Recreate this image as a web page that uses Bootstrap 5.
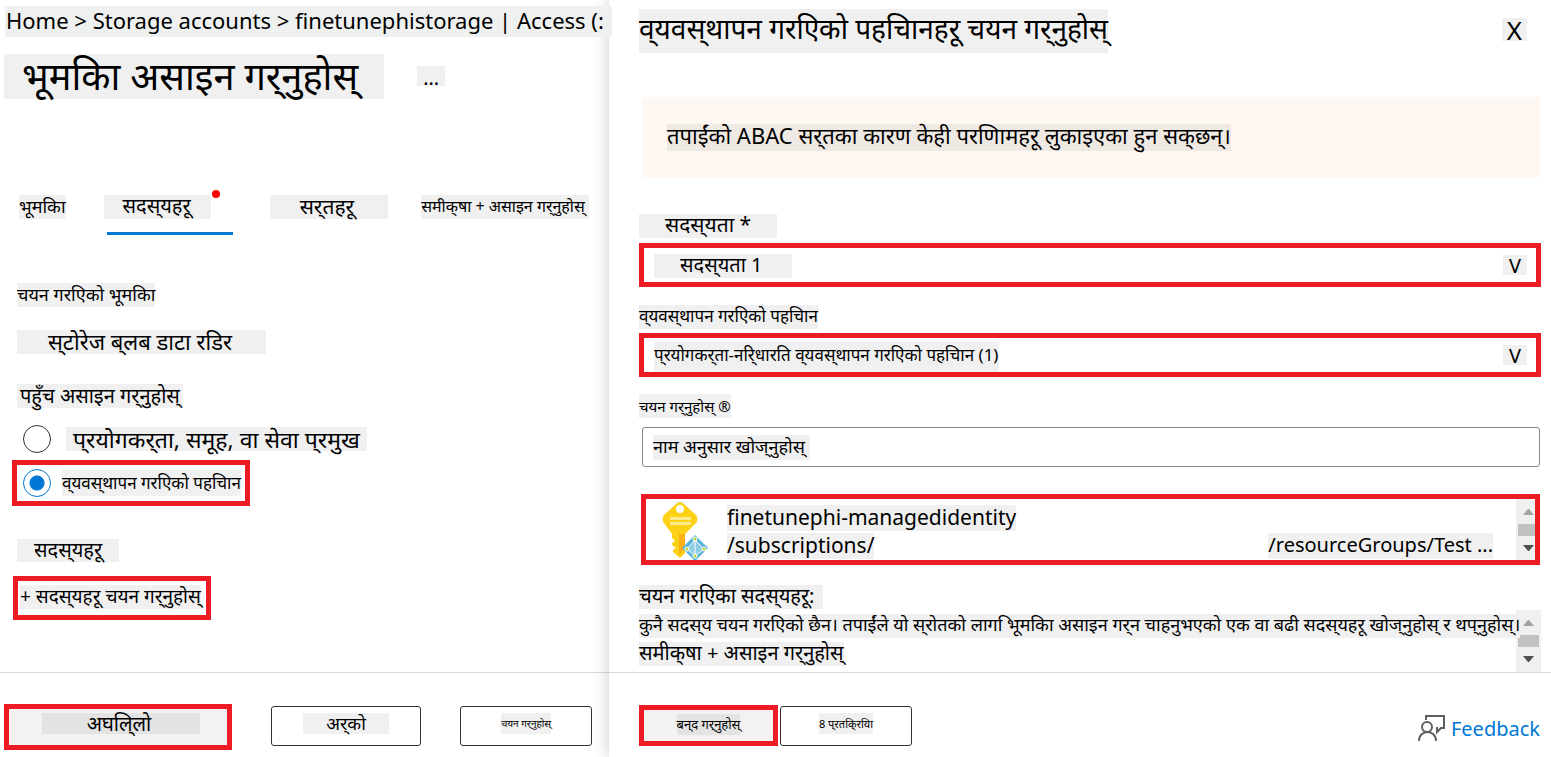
<!DOCTYPE html>
<html lang="ne">
<head>
<meta charset="utf-8">
<meta name="viewport" content="width=device-width, initial-scale=1">
<title>भूमकिा असाइन गर्&zwnj;नुहोस्</title>
<link href="https://cdn.jsdelivr.net/npm/bootstrap@5.3.0/dist/css/bootstrap.min.css" rel="stylesheet">
<style>
  body { font-family: "Noto Sans", sans-serif; font-feature-settings: "blws" 0; color: #000; background: #fff; font-size: 20px; line-height: 24px; }
  .shell { display: grid; grid-template-columns: 609fr 942fr; min-height: 100vh; }
  .pane { min-width: 0; }
  .side-pane { background: #fff; box-shadow: 0 0 16px rgba(0,0,0,.22); padding-top: 9px; }
  .main-pane { padding-top: 6px; }
  .chip { display: inline-block; background: #f0f0f0; white-space: nowrap; line-height: 24px; }
  .t10 { font-size: 10px; } .t11 { font-size: 11px; } .t13 { font-size: 13px; } .t15 { font-size: 15px; }
  .t16 { font-size: 16px; } .t17 { font-size: 17px; } .t18 { font-size: 18px; } .t19 { font-size: 19px; }
  .t20 { font-size: 20px; } .t21 { font-size: 21px; } .t22 { font-size: 22px; } .t23 { font-size: 23px; }
  .crumbs { margin-left: 5px; height: 31px; line-height: 28px; font-size: 22px; background: #eff1f1; white-space: nowrap; position: relative; z-index: 2; padding-left: 1px; width: max-content; padding-right: 8px; }
  .crumbs a, .tabs a, .add-link { color: inherit; text-decoration: none; }
  .page-title { font-size: 38px; line-height: 42px; height: 45px; padding: 0 26px 0 18px; margin: 0; font-weight: 400; }
  .title-row { margin: 17px 0 96px 4px; gap: 33px; }
  .more { border: 0; padding: 0 6px; height: 20px; line-height: 24px; margin-top: 12px; }
  .tabs { padding: 0 19px; height: 40px; }
  .tabs a { display: block; height: 40px; position: relative; }
  .tabs .chip { line-height: 22px; height: 24px; vertical-align: top; }
  .tab-active { margin-left: 38px; padding-right: 22px; }
  .tab-active::after { content: ""; position: absolute; left: 3px; right: 0; bottom: 0; height: 3px; background: #0078d4; }
  .tab-active .chip { padding: 0 20px 0 19px; }
  .tab-cond { margin-left: 37px; }
  .tab-cond .chip { padding: 0 34px 0 30px; }
  .tab-review { margin-left: 33px; }
  .tab-review .chip { padding-right: 4px; }
  .dot { position: absolute; width: 8px; height: 8px; border-radius: 50%; background: #f00; right: 13px; top: -5px; }
  .marked { border: 5px solid #ed1c24; }
  .stack { padding-left: 17px; }
  .role-label { margin-top: 48px; line-height: 22px; height: 24px; }
  .role-name { margin-top: 23px; padding: 0 34px 0 31px; line-height: 22px; height: 24px; }
  .assign { margin-top: 30px; padding: 0 3px; }
  .pick { width: 28px; height: 28px; margin: 0; flex: none; appearance: none; border: 1px solid #323130; border-radius: 50%; background: #fff; }
  .pick:checked { border-color: #0078d4; background: radial-gradient(circle, #0078d4 7px, #fff 8px); }
  .choice { gap: 11px; padding-left: 6px; }
  .choice-off { margin-top: 17px; }
  .choice-off .chip { margin-left: 4px; padding: 0 7px 0 7px; }
  .choice-on { margin: 7px 0 33px -5px; height: 46px; padding: 0 4px 0 6px; width: max-content; }
  .choice-on .chip { line-height: 26px; }
  .members { padding: 0 17px; line-height: 22px; height: 23px; }
  .add-link { margin: 14px 0 0 -4px; padding: 4px 5px 6px 2px; display: block; width: max-content; }
  .add-link .chip { line-height: 22px; height: 24px; vertical-align: top; }
  .foot { border-top: 1px solid #dcdcdc; height: 85px; padding-top: 31px; }
  .foot button { background: #fff; border: 1px solid #323130; border-radius: 3px; height: 40px; margin-top: 2px; padding: 6px 0 0; display: flex; justify-content: center; align-items: flex-start; color: #000; }
  .foot button.marked { border: 5px solid #ed1c24; border-radius: 0; background: #f3f2f1; margin-top: 0; padding-top: 4px; }
  .foot button .chip { line-height: 21px; }
  .foot button.marked .chip { background: #e3e3e3; }
  .btns { gap: 39px; padding-left: 4px; }
  .foot .w-next { width: 228px; height: 46px; }
  .w-next .chip { padding: 0 49px 0 45px; margin-left: 6px; }
  .w-other { width: 150px; }
  .w-other .chip { padding: 0 23px; }
  .w-small { width: 132px; }
  .side-btns { gap: 2px; padding: 1px 0 0 30px; }
  .foot .w-close { width: 139px; height: 41px; }
  .foot .side-btns .w-small { margin-top: 1px; }
  .side-body { padding: 0 11px 0 30px; }
  .side-title { font-size: 28px; line-height: 39px; height: 44px; margin: 0; font-weight: 400; }
  .close-x { border: 0; padding: 0 5px; font-size: 26px; margin: 9px 13px 0 0; height: 23px; line-height: 25px; }
  .notice { margin: 44px 0 36px 3px; background: #fff7f1; border-radius: 4px; padding: 27px 25px; }
  .notice .chip { background: #efe9e4; line-height: 23px; height: 27px; display: block; width: max-content; }
  .combo { height: 44px; margin-right: -1px; }
  .combo select { appearance: none; border: 0; flex: 1; min-width: 0; color: #000; outline: 0; height: 34px; }
  .combo .s-one { padding: 0 0 0 36px; background: linear-gradient(#f0f0f0,#f0f0f0) 10px 6px / 138px 24px no-repeat; }
  .combo .s-two { padding: 0 0 0 10px; background: linear-gradient(#f0f0f0,#f0f0f0) 10px 4px / 345px 30px no-repeat; }
  .combo .chip { padding: 0 6px; line-height: 22px; height: 20px; margin: 7px 9px 0 0; }
  .lab { display: block; width: max-content; }
  .sub-label { padding: 0 26px; line-height: 21px; height: 24px; margin-bottom: 5px; }
  .ident-label { margin: 18px 0 4px; line-height: 22px; height: 24px; }
  .find-label { margin-top: 17px; }
  .search { width: 100%; border: 1px solid #8a8886; border-radius: 3px; height: 40px; padding: 0 10px 2px; color: #000; background: linear-gradient(#f0f0f0,#f0f0f0) 10px 7px / 157px 25px no-repeat; }
  .search::placeholder { color: #000; opacity: 1; }
  .search-wrap { margin: 9px 0 27px 3px; }
  .result { margin-left: 2px; height: 71px; overflow: hidden; }
  .result .key { margin: 2px 0 0 16px; flex: none; }
  .result .words { margin: 6px 0 0 17px; flex: 1; min-width: 0; }
  .result .words .chip { line-height: 24px; height: 26px; }
  .path-row { margin: 2px 23px 0 0; }
  .bar { flex: none; width: 25px; height: 62px; background: #f0f0f0; }
  .bar-cut { width: 19px; height: 61px; overflow: hidden; flex: none; }
  .chosen { margin-top: 20px; padding-right: 9px; line-height: 22px; height: 24px; }
  .chosen-row { margin: 1px -1px 0 0; }
  .chosen-text { flex: 1; min-width: 0; padding-top: 4px; position: relative; }
  .chosen-text .chip { line-height: 21px; height: 24px; margin-bottom: 4px; }
  .feedback { color: #0078d4; text-decoration: none; gap: 6px; margin-right: 11px; padding-top: 11px; }
</style>
</head>
<body>
<div class="shell">
  <main class="pane main-pane d-flex flex-column">
    <nav class="crumbs"><a href="#">Home</a> &gt; <a href="#">Storage accounts</a> &gt; <a href="#">finetunephistorage | Access (:</a></nav>
    <div class="title-row d-flex align-items-start">
      <h1 class="chip page-title">भूमकिा असाइन गर्&zwnj;नुहोस्</h1>
      <button type="button" class="chip more">...</button>
    </div>
    <nav class="tabs d-flex">
      <a href="#"><span class="chip t18">भूमकिा</span></a>
      <a href="#" class="tab-active" aria-current="page"><span class="chip t20">सदस्&zwnj;यहरू</span><i class="dot"></i></a>
      <a href="#" class="tab-cond"><span class="chip t21">सर्&zwnj;तहरू</span></a>
      <a href="#" class="tab-review"><span class="chip t16">समीक्&zwnj;षा + असाइन गर्&zwnj;नुहोस्</span></a>
    </nav>
    <div class="stack flex-grow-1">
      <div class="chip lab role-label t18">चयन गरएिको भूमकिा</div>
      <div class="chip lab role-name t22">स्&zwnj;टोरेज ब्&zwnj;लब डाटा रडिर</div>
      <div class="chip lab assign t20" id="assign">पहुँच असाइन गर्&zwnj;नुहोस्</div>
      <div role="radiogroup" aria-labelledby="assign">
        <div class="choice choice-off d-flex align-items-center">
          <input class="pick" type="radio" name="who" id="who1"><label for="who1" class="chip t23">प्&zwnj;रयोगकर्&zwnj;ता, समूह, वा सेवा प्&zwnj;रमुख</label>
        </div>
        <div class="choice choice-on marked d-flex align-items-center">
          <input class="pick" type="radio" name="who" id="who2" checked><label for="who2" class="chip t17">व्&zwnj;यवस्&zwnj;थापन गरएिको पहचिान</label>
        </div>
      </div>
      <div class="chip lab members t20">सदस्&zwnj;यहरू</div>
      <a href="#" class="add-link marked"><span class="chip t19">+ सदस्&zwnj;यहरू चयन गर्&zwnj;नुहोस्</span></a>
    </div>
    <footer class="foot">
      <div class="btns d-flex align-items-start">
        <button type="button" class="marked w-next"><span class="chip t20">अघलि्&zwnj;लो</span></button>
        <button type="button" class="w-other"><span class="chip t18">अर्&zwnj;को</span></button>
        <button type="button" class="w-small"><span class="chip t10">चयन गर्&zwnj;नुहोस्</span></button>
      </div>
    </footer>
  </main>

  <aside class="pane side-pane d-flex flex-column">
    <div class="side-body flex-grow-1">
      <div class="d-flex justify-content-between align-items-start">
        <h2 class="chip side-title">व्&zwnj;यवस्&zwnj;थापन गरएिको पहचिानहरू चयन गर्&zwnj;नुहोस्</h2>
        <button type="button" class="chip close-x">X</button>
      </div>
      <div class="notice"><span class="chip t22">तपाईंको ABAC सर्&zwnj;तका कारण केही परणिामहरू लुकाइएका हुन सक्&zwnj;छन्।</span></div>

      <label for="sub" class="chip lab sub-label t21">सदस्&zwnj;यता *</label>
      <div class="combo marked d-flex">
        <select id="sub" class="s-one t20"><option>सदस्&zwnj;यता 1</option></select><span class="chip t20">V</span>
      </div>
      <label for="ident" class="chip lab ident-label t17">व्&zwnj;यवस्&zwnj;थापन गरएिको पहचिान</label>
      <div class="combo marked d-flex">
        <select id="ident" class="s-two t17"><option>प्&zwnj;रयोगकर्&zwnj;ता-नरि्&zwnj;धारति व्&zwnj;यवस्&zwnj;थापन गरएिको पहचिान (1)</option></select><span class="chip t20">V</span>
      </div>
      <label for="find" class="chip lab find-label t15">चयन गर्&zwnj;नुहोस् ®</label>
      <div class="search-wrap"><input id="find" class="search t18" type="text" placeholder="नाम अनुसार खोज्&zwnj;नुहोस्"></div>

      <div class="result marked d-flex">
        <svg class="key" width="48" height="60" viewBox="0 0 48 60" aria-hidden="true">
          <path d="M14 3Q18-1 22 3L34 14Q37 18 34 22L23 33V52L18 57L11 51V49L14 47L10 44V42L13 40L10 37V33L2 22Q-1 18 2 14Z" fill="#fdd116"/>
          <path d="M17 33h6v14l-6 7z" fill="#fbb016"/>
          <circle cx="18" cy="8" r="4" fill="#fff"/>
          <path d="M8 16h21v3H8zM8 21h21v3H8z" fill="#fdea8c"/>
          <path d="M33 34L46 47L33 60L20 47Z" fill="#59b4d9"/>
          <path d="M33 39L25 48L33 55L42 48Z" fill="#8fcde6"/>
          <path d="M33 39L25 48L33 55L42 48ZM33 39V55" fill="none" stroke="#fff" stroke-width="1"/>
          <g fill="#b8d432" stroke="#fff" stroke-width="1"><circle cx="33" cy="38" r="2"/><circle cx="25" cy="48" r="2"/><circle cx="42" cy="48" r="2"/><circle cx="33" cy="55" r="2"/></g>
        </svg>
        <div class="words">
          <div class="chip t21 lab">finetunephi-managedidentity</div>
          <div class="path-row d-flex justify-content-between"><span class="chip t21">/subscriptions/</span><span class="chip t20">/resourceGroups/Test ...</span></div>
        </div>
        <div class="bar-cut"><svg class="bar" viewBox="0 0 25 62" aria-hidden="true"><path d="M7 16L12 10H13L18 16Z" fill="#a3a3a3"/><path d="M2 25h21v12H2z" fill="#c1c1c1"/><path d="M7 46h11L13 52H12Z" fill="#505050"/></svg></div>
      </div>

      <div class="chip lab chosen t20">चयन गरएिका सदस्&zwnj;यहरू:</div>
      <div class="chosen-row d-flex align-items-start">
        <div class="chosen-text">
          <div class="chip lab t18">कुनै सदस्&zwnj;य चयन गरएिको छैन। तपाईंले यो स्&zwnj;रोतको लाग&nbsp;िभूमकिा असाइन गर्&zwnj;न चाहनुभएको एक वा बढी सदस्&zwnj;यहरू खोज्&zwnj;नुहोस् र थप्&zwnj;नुहोस्।</div>
          <div class="chip lab t20">समीक्&zwnj;षा + असाइन गर्&zwnj;नुहोस्</div>
        </div>
        <svg class="bar" viewBox="0 0 25 62" aria-hidden="true"><path d="M7 16L12 10H13L18 16Z" fill="#a3a3a3"/><path d="M2 25h21v12H2z" fill="#c1c1c1"/><path d="M7 46h11L13 52H12Z" fill="#505050"/></svg>
      </div>
    </div>
    <footer class="foot d-flex justify-content-between align-items-start">
      <div class="side-btns d-flex align-items-start">
        <button type="button" class="marked w-close"><span class="chip t13">बन्&zwnj;द गर्&zwnj;नुहोस्</span></button>
        <button type="button" class="w-small"><span class="chip t11">8 प्&zwnj;रतकि्&zwnj;रयिा</span></button>
      </div>
      <a href="#" class="feedback t20 d-flex align-items-center">
        <svg width="27" height="27" viewBox="0 0 27 27" fill="none" stroke="#605e5c" stroke-width="2" aria-hidden="true"><path d="M8 5V1H26V13H23L19 17V12"/><circle cx="9" cy="12" r="5"/><path d="M1 26C1 14 18 14 18 26"/></svg>
        Feedback</a>
    </footer>
  </aside>
</div>
<script src="https://cdn.jsdelivr.net/npm/bootstrap@5.3.0/dist/js/bootstrap.bundle.min.js"></script>
</body>
</html>
